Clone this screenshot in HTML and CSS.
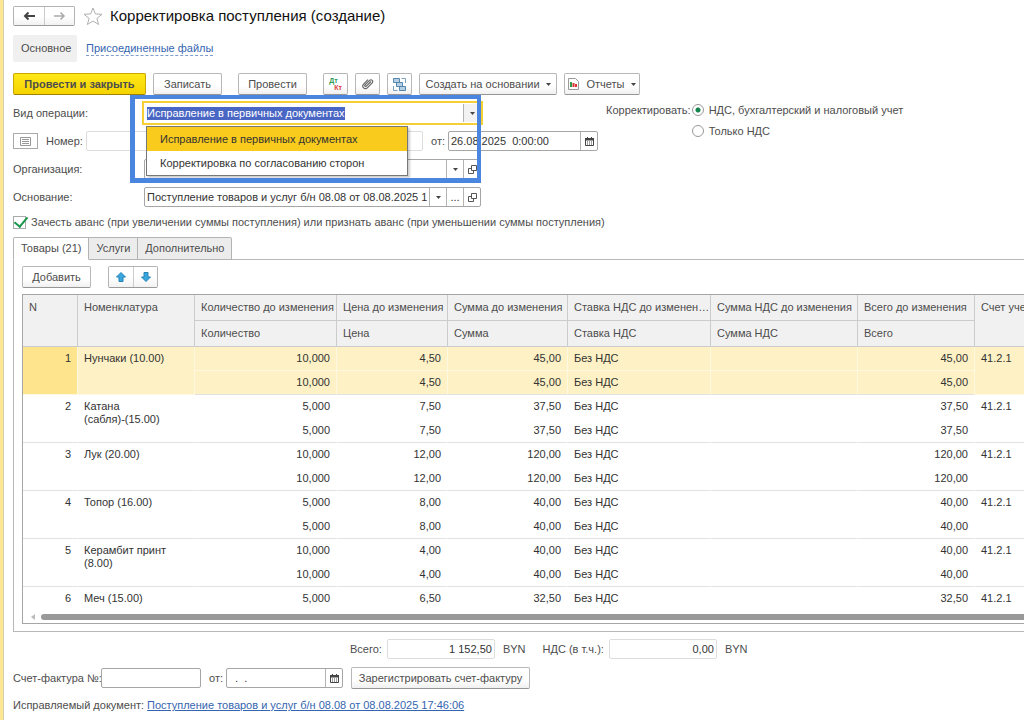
FILE: index.html
```html
<!DOCTYPE html>
<html lang="ru">
<head>
  <meta charset="UTF-8">
  <meta name="viewport" content="width=device-width, initial-scale=1.0">
  <title>Корректировка поступления (создание)</title>
  <link rel="stylesheet" href="styles.css">
</head>
<body>
  <!-- общие иконки -->
  <svg class="sprite" aria-hidden="true">
    <symbol id="i-calendar" viewBox="0 0 9 9">
      <path d="M0.5 1.5h8v7h-8z" fill="#fff" stroke="#444"/>
      <path d="M0 1h9v2.500H0zM2 0h1v2H2zM6 0h1v2H6z" fill="#444"/>
      <path d="M2 4.500h1v1H2zM4 4.500h1v1H4zM6 4.500h1v1H6zM2 6.500h1v1H2zM4 6.500h1v1H4zM6 6.500h1v1H6z" fill="#444"/>
    </symbol>
    <symbol id="i-open" viewBox="0 0 9 9">
      <path d="M3.500 0.500h5v5h-5zM3.500 3.500h-3v5h5v-3" fill="none" stroke="#555"/>
    </symbol>
    <symbol id="i-down" viewBox="0 0 5 3">
      <path d="M0 0h5L2.500 3z" fill="#444"/>
    </symbol>
  </svg>

  <main class="window">
    <header class="header">
      <div class="btn-group">
        <button type="button" aria-label="Назад">
          <svg width="12" height="10" viewBox="0 0 12 10"><path d="M12 5H2M5.500 1.500L2 5l3.500 3.500" fill="none" stroke="#444" stroke-width="2"/></svg>
        </button>
        <button type="button" aria-label="Вперед">
          <svg width="12" height="10" viewBox="0 0 12 10"><path d="M0 5h10M6.500 1.500L10 5l-3.500 3.500" fill="none" stroke="#aaa" stroke-width="1.500"/></svg>
        </button>
      </div>
      <svg class="star" width="20" height="18" viewBox="0 0 20 18"><path d="M10 1l2.400 5.900 6.600.4-5.100 4.100 1.700 6.100L10 14l-5.600 3.500 1.700-6.100L1 7.300l6.600-.4z" fill="#fff" stroke="#b0b0b0"/></svg>
      <h1>Корректировка поступления (создание)</h1>
    </header>

    <nav class="sections">
      <span class="current">Основное</span>
      <a href="#">Присоединенные файлы</a>
    </nav>

    <div class="toolbar">
      <button type="button" class="btn primary w-main">Провести и закрыть</button>
      <button type="button" class="btn w-save">Записать</button>
      <button type="button" class="btn w-save spaced">Провести</button>
      <button type="button" class="btn icon spaced" aria-label="Дт Кт">
        <span class="dtkt"><span class="dt">Дт</span><span class="kt">Кт</span></span>
      </button>
      <button type="button" class="btn icon" aria-label="Файлы">
        <svg width="12" height="12" viewBox="0 0 12 12"><path d="M9 3.500L4.300 8.200a.9.9 0 0 1-1.300-1.300L7.600 2.300a1.800 1.800 0 0 1 2.600 2.600L5.300 9.800A2.600 2.600 0 0 1 1.600 6.100L6 1.700" fill="none" stroke="#666" stroke-width="1.200"/></svg>
      </button>
      <button type="button" class="btn icon" aria-label="Структура">
        <svg width="13" height="13" viewBox="0 0 13 13">
          <path d="M8.500.5h4V5M4.500 12.500h-4V8" fill="none" stroke="#7fa3bf"/>
          <path d="M.5.5h6v4h-6zM3.500 4.500h6v4h-6zM6.500 8.500h6v4h-6z" fill="#b5d0e4" stroke="#5586ab"/>
        </svg>
      </button>
      <button type="button" class="btn w-create">Создать на основании <svg class="caret"><use href="#i-down"/></svg></button>
      <button type="button" class="btn w-reports">
        <svg class="report" width="11" height="12" viewBox="0 0 11 12">
          <path d="M.5.500h7l3 3v8H.5z" fill="#fff" stroke="#999"/>
          <path d="M2 4h2v5H2z" fill="#2a9a45"/><path d="M4.500 5h2v4h-2z" fill="#d33"/><path d="M7 6h2v3H7z" fill="#d33"/>
        </svg>
        Отчеты <svg class="caret"><use href="#i-down"/></svg>
      </button>
    </div>

    <form class="form">
      <div class="fields">
        <div class="row">
          <label class="name" for="kind">Вид операции:</label>
          <div class="combo">
            <input id="kind" type="text" value="Исправление в первичных документах" role="combobox" aria-expanded="true" aria-controls="kindList">
            <button type="button" aria-label="Выбрать"><svg class="caret"><use href="#i-down"/></svg></button>
            <ul class="combo-list" id="kindList" role="listbox">
              <li class="active" role="option" aria-selected="true">Исправление в первичных документах</li>
              <li role="option">Корректировка по согласованию сторон</li>
            </ul>
          </div>
        </div>
        <div class="row">
          <button type="button" class="list-btn" aria-label="Список">
            <svg width="11" height="9" viewBox="0 0 11 9"><path d="M.5.500h10v8H.5z" fill="#fff" stroke="#999"/><path d="M2 2.500h7M2 4.500h7M2 6.500h7" stroke="#999"/></svg>
          </button>
          <label class="number" for="num">Номер:</label>
          <div class="field pale wide"><input id="num" type="text"></div>
          <label class="from" for="date">от:</label>
          <div class="field date">
            <input id="date" type="text" value="26.08.2025  0:00:00">
            <button type="button" aria-label="Календарь"><svg class="ico"><use href="#i-calendar"/></svg></button>
          </div>
        </div>
        <div class="row">
          <label class="name" for="org">Организация:</label>
          <div class="field wide">
            <input id="org" type="text">
            <button type="button" aria-label="Выбрать"><svg class="caret"><use href="#i-down"/></svg></button>
            <button type="button" aria-label="Открыть"><svg class="ico"><use href="#i-open"/></svg></button>
          </div>
        </div>
        <div class="row">
          <label class="name" for="base">Основание:</label>
          <div class="field wide">
            <input id="base" type="text" value="Поступление товаров и услуг б/н 08.08 от 08.08.2025 17:46:06">
            <button type="button" aria-label="Выбрать"><svg class="caret"><use href="#i-down"/></svg></button>
            <button type="button" aria-label="Показать все">...</button>
            <button type="button" aria-label="Открыть"><svg class="ico"><use href="#i-open"/></svg></button>
          </div>
        </div>
        <div class="frame"></div>
      </div>

      <div class="adjust">
        <span>Корректировать:</span>
        <div class="radios">
          <label><input type="radio" name="adjust" checked> НДС, бухгалтерский и налоговый учет</label>
          <label><input type="radio" name="adjust"> Только НДС</label>
        </div>
      </div>
    </form>

    <label class="advance">
      <input type="checkbox" checked>
      Зачесть аванс (при увеличении суммы поступления) или признать аванс (при уменьшении суммы поступления)
    </label>

    <div class="tabs" role="tablist">
      <button type="button" role="tab" class="selected" aria-selected="true">Товары (21)</button>
      <button type="button" role="tab">Услуги</button>
      <button type="button" role="tab">Дополнительно</button>
    </div>

    <section class="panel">
      <div class="panel-bar">
        <button type="button" class="btn add">Добавить</button>
        <div class="btn-group arrows">
          <button type="button" aria-label="Вверх">
            <svg width="10" height="10" viewBox="0 0 10 10"><path d="M5 .5l4.500 4.500h-2.500v4.500H3V5H.5z" fill="#3aa6de" stroke="#2380b5"/></svg>
          </button>
          <button type="button" aria-label="Вниз">
            <svg width="10" height="10" viewBox="0 0 10 10"><path d="M5 9.500L.5 5H3V.5h4V5h2.500z" fill="#3aa6de" stroke="#2380b5"/></svg>
          </button>
        </div>
      </div>

      <div class="grid">
        <table>
          <colgroup>
            <col class="c-n"><col class="c-item"><col class="c-qty"><col class="c-price"><col class="c-sum"><col class="c-rate"><col class="c-vat"><col class="c-total"><col class="c-acc">
          </colgroup>
          <thead>
            <tr>
              <th rowspan="2">N</th>
              <th rowspan="2">Номенклатура</th>
              <th>Количество до изменения</th>
              <th>Цена до изменения</th>
              <th>Сумма до изменения</th>
              <th>Ставка НДС до изменения</th>
              <th>Сумма НДС до изменения</th>
              <th>Всего до изменения</th>
              <th rowspan="2">Счет учета</th>
            </tr>
            <tr>
              <th>Количество</th>
              <th>Цена</th>
              <th>Сумма</th>
              <th>Ставка НДС</th>
              <th>Сумма НДС</th>
              <th>Всего</th>
            </tr>
          </thead>
          <tbody class="current-row">
            <tr><td rowspan="2" class="num">1</td><td rowspan="2">Нунчаки (10.00)</td><td class="num">10,000</td><td class="num">4,50</td><td class="num">45,00</td><td>Без НДС</td><td></td><td class="num">45,00</td><td rowspan="2">41.2.1</td></tr>
            <tr><td class="num">10,000</td><td class="num">4,50</td><td class="num">45,00</td><td>Без НДС</td><td></td><td class="num">45,00</td></tr>
          </tbody>
          <tbody>
            <tr><td rowspan="2" class="num">2</td><td rowspan="2">Катана<br>(сабля)-(15.00)</td><td class="num">5,000</td><td class="num">7,50</td><td class="num">37,50</td><td>Без НДС</td><td></td><td class="num">37,50</td><td rowspan="2">41.2.1</td></tr>
            <tr><td class="num">5,000</td><td class="num">7,50</td><td class="num">37,50</td><td>Без НДС</td><td></td><td class="num">37,50</td></tr>
          </tbody>
          <tbody>
            <tr><td rowspan="2" class="num">3</td><td rowspan="2">Лук (20.00)</td><td class="num">10,000</td><td class="num">12,00</td><td class="num">120,00</td><td>Без НДС</td><td></td><td class="num">120,00</td><td rowspan="2">41.2.1</td></tr>
            <tr><td class="num">10,000</td><td class="num">12,00</td><td class="num">120,00</td><td>Без НДС</td><td></td><td class="num">120,00</td></tr>
          </tbody>
          <tbody>
            <tr><td rowspan="2" class="num">4</td><td rowspan="2">Топор (16.00)</td><td class="num">5,000</td><td class="num">8,00</td><td class="num">40,00</td><td>Без НДС</td><td></td><td class="num">40,00</td><td rowspan="2">41.2.1</td></tr>
            <tr><td class="num">5,000</td><td class="num">8,00</td><td class="num">40,00</td><td>Без НДС</td><td></td><td class="num">40,00</td></tr>
          </tbody>
          <tbody>
            <tr><td rowspan="2" class="num">5</td><td rowspan="2">Керамбит принт<br>(8.00)</td><td class="num">10,000</td><td class="num">4,00</td><td class="num">40,00</td><td>Без НДС</td><td></td><td class="num">40,00</td><td rowspan="2">41.2.1</td></tr>
            <tr><td class="num">10,000</td><td class="num">4,00</td><td class="num">40,00</td><td>Без НДС</td><td></td><td class="num">40,00</td></tr>
          </tbody>
          <tbody>
            <tr><td class="num">6</td><td>Меч (15.00)</td><td class="num">5,000</td><td class="num">6,50</td><td class="num">32,50</td><td>Без НДС</td><td></td><td class="num">32,50</td><td>41.2.1</td></tr>
          </tbody>
        </table>
        <div class="scroll">
          <svg width="4" height="6" viewBox="0 0 4 6"><path d="M4 0v6L0 3z" fill="#bbb"/></svg>
          <div class="thumb"></div>
        </div>
      </div>
    </section>

    <div class="totals">
      <label for="total">Всего:</label>
      <div class="field pale sum"><input id="total" type="text" value="1 152,50"></div>
      <span class="currency">BYN</span>
      <label for="vat">НДС (в т.ч.):</label>
      <div class="field pale sum"><input id="vat" type="text" value="0,00"></div>
      <span class="currency">BYN</span>
    </div>

    <div class="invoice">
      <label class="inv-name" for="inv">Счет-фактура №:</label>
      <div class="field inv-num"><input id="inv" type="text"></div>
      <label class="from" for="invDate">от:</label>
      <div class="field inv-date">
        <input id="invDate" type="text" value="  .  .">
        <button type="button" aria-label="Календарь"><svg class="ico"><use href="#i-calendar"/></svg></button>
      </div>
      <button type="button" class="btn register">Зарегистрировать счет-фактуру</button>
    </div>

    <div class="source">
      <span>Исправляемый документ:</span>
      <a href="#">Поступление товаров и услуг б/н 08.08 от 08.08.2025 17:46:06</a>
    </div>
  </main>
  <script src="script.js"></script>
</body>
</html>
```
FILE: styles.css
```css
* { box-sizing: border-box; }
body {
  margin: 0;
  background: #fff;
  color: #4d4d4d;
  font: 11px/13px "Liberation Sans", Arial, sans-serif;
}
button, input {
  font: inherit;
  color: inherit;
  margin: 0;
}
button { cursor: pointer; }
a { color: #3565b0; }
.sprite { display: none; }
.caret { width: 5px; height: 3px; flex: none; }
.ico { width: 9px; height: 9px; }

.window {
  min-height: 100vh;
  border-left: 3px solid #fde694;
  box-shadow: inset 1px 0 #d9cfa8;
  padding: 6px 0 0 10px;
  overflow: hidden;
}

/* шапка */
.header {
  display: flex;
  align-items: center;
  height: 20px;
}
.header h1 {
  margin: 0 0 0 7px;
  font-size: 15px;
  line-height: 20px;
  font-weight: normal;
  color: #111;
}
.star { margin-left: 8px; }
.btn-group {
  display: flex;
  height: 20px;
  border: 1px solid #b3b3b3;
  border-bottom-color: #999;
  border-radius: 2px;
}
.btn-group button {
  display: flex;
  align-items: center;
  justify-content: center;
  width: 30px;
  padding: 0;
  border: 0;
  background: linear-gradient(#fff 50%, #f2f2f2);
}
.btn-group button + button { border-left: 1px solid #ccc; }

.sections {
  display: flex;
  align-items: center;
  gap: 9px;
  margin-top: 9px;
}
.sections .current {
  padding: 7px 8px;
  width: 64px;
  background: #f0f0f0;
  border-radius: 2px;
}
.sections a {
  text-decoration: none;
  border-bottom: 1px dashed #7f9ccc;
}

.btn {
  display: flex;
  align-items: center;
  justify-content: center;
  flex: none;
  height: 22px;
  padding: 0;
  border: 1px solid #b8b8b8;
  border-bottom-color: #959595;
  border-radius: 2px;
  background: linear-gradient(#fff 60%, #f0f0f0);
  white-space: nowrap;
}
.toolbar {
  display: flex;
  gap: 7px;
  margin-top: 11px;
}
.toolbar .spaced { margin-left: 9px; }
.btn.primary {
  border-color: #c9a800;
  border-bottom-color: #9c8300;
  background: linear-gradient(#ffe818, #f5d300);
  font-weight: bold;
}
.w-main { width: 133px; }
.w-save { width: 69px; }
.btn.icon { width: 25px; }
.w-create { width: 138px; }
.w-reports { width: 76px; }
.btn .caret { margin-left: 6px; }
.report { margin-right: 7px; }
.dtkt {
  display: grid;
  font-size: 7px;
  line-height: 7px;
  font-weight: bold;
  text-align: left;
}
.dt { color: #2a9a55; }
.kt { color: #d8403c; padding-left: 5px; }

/* реквизиты */
.form {
  display: flex;
  gap: 8px;
  margin-top: 8px;
}
.fields {
  position: relative;
  display: grid;
  gap: 8px;
  width: 585px;
}
.row {
  display: flex;
  align-items: center;
  height: 20px;
}
.row .name { width: 131px; }
.field {
  display: flex;
  height: 20px;
  border: 1px solid #a6a6a6;
  border-radius: 2px;
  background: #fff;
  color: #333;
}
.field.pale { border-color: #ddd; }
.field input, .combo input {
  flex: 1;
  min-width: 0;
  padding: 0 2px;
  border: 0;
  outline: 0;
  background: none;
  white-space: pre;
}
.field button, .combo button {
  display: flex;
  align-items: center;
  justify-content: center;
  flex: none;
  width: 17px;
  padding: 0;
  border: 0;
  border-left: 1px solid #b3b3b3;
  background: none;
}
.wide { width: 337px; }
.date { width: 150px; }
.list-btn {
  display: flex;
  align-items: center;
  justify-content: center;
  width: 25px;
  height: 16px;
  padding: 0;
  border: 1px solid #aaa;
  background: #fff;
}
.number { width: 48px; padding-left: 8px; }
.from { width: 25px; padding-left: 8px; }

.combo {
  position: relative;
  display: flex;
  width: 341px;
  height: 24px;
  margin-left: -2px;
  padding: 1px;
  border: 2px solid #f5cf33;
  background: #fff;
  color: #333;
}
.combo button { background: #f2f2f2; }
.combo input::selection { background: #4a66c4; color: #fff; }
.combo-list {
  position: absolute;
  z-index: 2;
  top: 23px;
  left: 2px;
  width: 262px;
  margin: 0;
  padding: 0;
  list-style: none;
  border: 1px solid #777;
  background: #fff;
  box-shadow: 2px 2px 2px rgba(0, 0, 0, 0.2);
}
.combo-list li {
  height: 24px;
  padding: 0 13px;
  line-height: 24px;
}
.combo-list .active { background: #f8cb1c; }

/* рамка вокруг выбора вида операции */
.frame {
  position: absolute;
  z-index: 3;
  top: -8px;
  left: 117px;
  width: 351px;
  height: 88px;
  border: 4px solid #4a86e0;
  border-width: 4px 4px 5px 5px;
  pointer-events: none;
}

.adjust {
  display: flex;
  gap: 1px;
  line-height: 14px;
}
.radios { display: grid; gap: 7px; align-content: start; }
.radios label { display: flex; align-items: center; gap: 5px; height: 14px; }
.radios input {
  appearance: none;
  width: 12px;
  height: 12px;
  border: 1px solid #999;
  border-radius: 50%;
}
.radios input:checked { background: radial-gradient(#12854a 2px, #fff 3px); }

.advance {
  display: flex;
  align-items: center;
  gap: 5px;
  height: 14px;
  margin-top: 8px;
}
.advance input {
  appearance: none;
  width: 13px;
  height: 13px;
  border: 1px solid #aaa;
  background: #fff;
}
.advance input:checked::before {
  content: "";
  display: block;
  width: 6px;
  height: 11px;
  margin: -3px 0 0 3px;
  border: solid #18964a;
  border-width: 0 2px 2px 0;
  transform: rotate(40deg);
}

/* закладки */
.tabs {
  display: flex;
  margin-top: 8px;
}
.tabs button {
  height: 23px;
  padding: 0 7px;
  border: 1px solid #b3b3b3;
  border-left: 0;
  background: #ececec;
  white-space: nowrap;
}
.tabs button:last-child { border-radius: 0 2px 0 0; }
.tabs .selected {
  border-left: 1px solid #b3b3b3;
  border-bottom-color: #fff;
  border-radius: 2px 0 0 0;
  background: #fff;
}
.panel {
  position: relative;
  z-index: -1;
  margin-top: -1px;
  padding: 6px 0 7px 8px;
  border: 1px solid #b8b8b8;
  border-right: 0;
}
.panel-bar { display: flex; gap: 17px; }
.add { width: 69px; }
.arrows { height: 22px; }
.arrows button { width: 24px; }

.grid {
  margin-top: 6px;
  border: 1px solid #a6a6a6;
  border-right: 0;
  overflow: hidden;
}
table {
  width: 1060px;
  table-layout: fixed;
  border-collapse: separate;
  border-spacing: 0;
}
.c-n { width: 55px; }
.c-item { width: 117px; }
.c-qty { width: 142px; }
.c-price { width: 111px; }
.c-sum { width: 120px; }
.c-rate { width: 143px; }
.c-vat { width: 147px; }
.c-total { width: 117px; }
th {
  height: 26px;
  padding: 6px 0 6px 6px;
  border-right: 1px solid #ccc;
  border-bottom: 1px solid #ccc;
  background: #f1f1f1;
  font-weight: normal;
  text-align: left;
  vertical-align: top;
  white-space: nowrap;
  overflow: hidden;
  text-overflow: ellipsis;
}
thead tr:first-child th { height: 25px; }
td {
  height: 24px;
  padding: 5px 6px;
  border-right: 1px solid transparent;
  vertical-align: top;
  color: #333;
}
.num { text-align: right; }
tbody tr:last-child td, td[rowspan] { border-bottom: 1px solid #e2e2e2; }
tbody:last-child tr:last-child td { border-bottom: 0; }
.current-row td {
  background: #fdf1c5;
  border-right-color: #fff8e0;
  border-bottom: 1px solid #fff8e0;
}
.current-row td:first-child[rowspan] { background: #fee48c; }
.scroll {
  display: flex;
  align-items: center;
  gap: 6px;
  height: 12px;
  padding-left: 8px;
}
.thumb {
  flex: 1;
  height: 6px;
  border-radius: 3px 0 0 3px;
  background: #999;
}

/* подвал */
.totals {
  display: flex;
  align-items: center;
  margin: 7px 0 0 337px;
}
.sum { width: 108px; margin-left: 5px; }
.sum input { text-align: right; }
.currency { margin: 0 17px 0 8px; }
.invoice {
  display: flex;
  align-items: center;
  height: 22px;
  margin-top: 8px;
}
.inv-name { width: 88px; white-space: nowrap; }
.inv-num { width: 100px; }
.inv-date { width: 117px; }
.register { width: 179px; margin-left: 8px; }
.source {
  display: flex;
  gap: 3px;
  margin-top: 10px;
}
```
FILE: script.js
```js
// при открытии формы фокус стоит на виде операции, текст выделен
var kind = document.getElementById('kind');
kind.focus();
kind.select();
```
